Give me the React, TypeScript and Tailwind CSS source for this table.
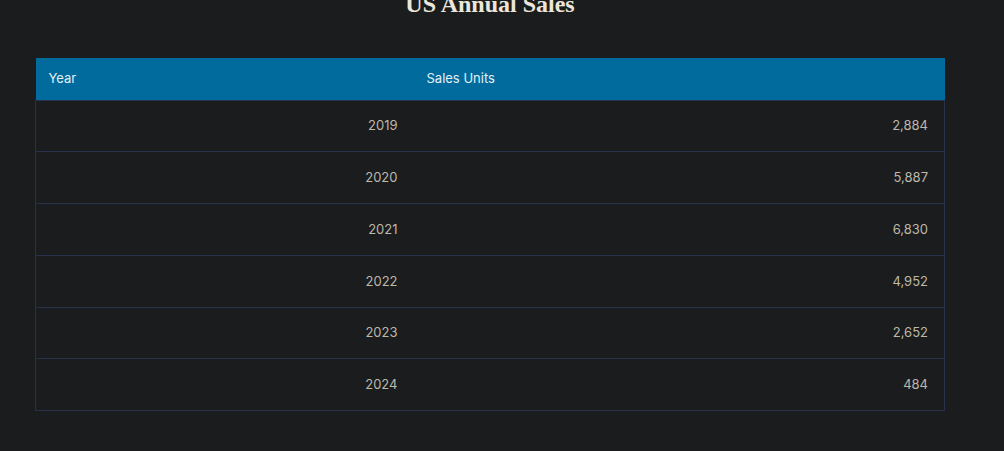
const rows = [
  { year: "2019", units: "2,884" },
  { year: "2020", units: "5,887" },
  { year: "2021", units: "6,830" },
  { year: "2022", units: "4,952" },
  { year: "2023", units: "2,652" },
  { year: "2024", units: "484" },
];

export default function App() {
  return (
    <div className="min-h-[451px] w-full overflow-hidden bg-[#1b1c1e] pl-[35px] pr-[59px]">
      <h2 className="-mt-[11px] text-center font-['Liberation_Serif',serif] text-[24px] font-bold leading-[30px] text-[#ece6da]">
        US Annual Sales
      </h2>
      <table className="mt-[39px] w-[910px] border-collapse font-['Inter',sans-serif] text-[13px]">
        <thead>
          <tr className="h-[42px] bg-[#016b9d] text-left text-[#e3f0f6]">
            <th className="w-[378px] px-[13px] font-normal">Year</th>
            <th className="px-[13px] font-normal">Sales Units</th>
          </tr>
        </thead>
        <tbody>
          {rows.map((r) => (
            <tr key={r.year} className="h-[51.8px] border border-[#28304a] text-[#bdb8aa]">
              <td className="pr-4 text-right">{r.year}</td>
              <td className="pr-4 text-right">{r.units}</td>
            </tr>
          ))}
        </tbody>
      </table>
    </div>
  );
}
